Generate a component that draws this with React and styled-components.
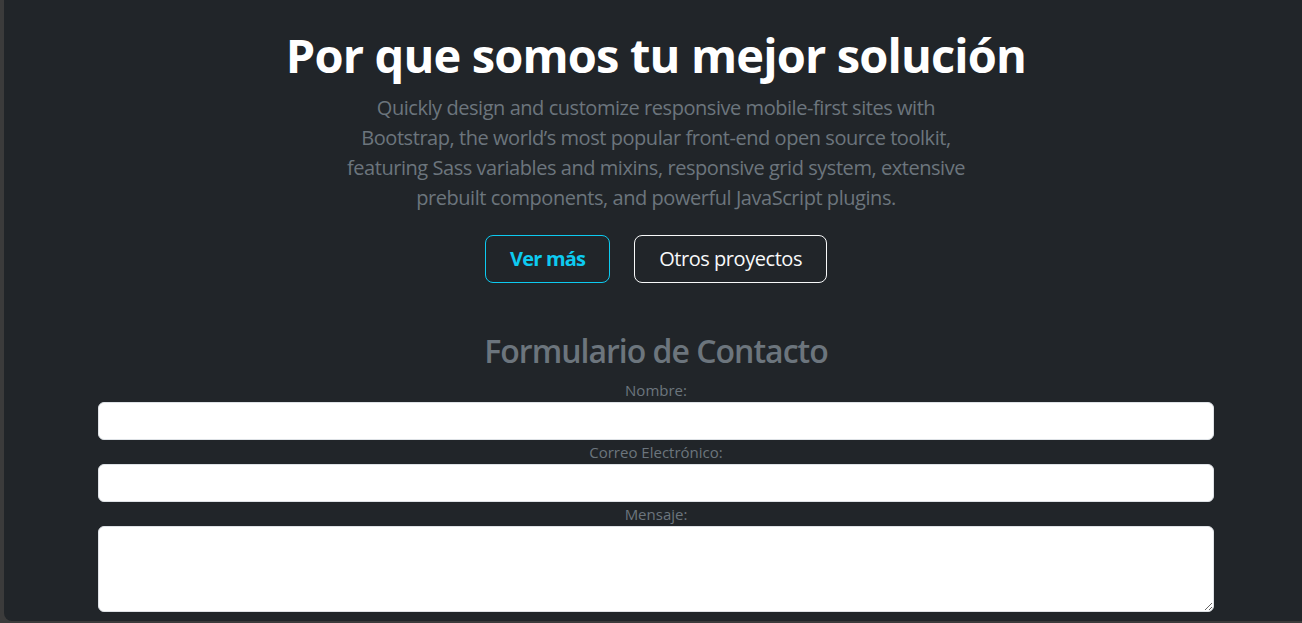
import React from 'react';
import styled, { createGlobalStyle } from 'styled-components';

const GlobalStyle = createGlobalStyle`
  html, body {
    margin: 0;
    padding: 0;
    background: #3b3b3b;
    overflow: hidden;
  }
  body {
    font-family: "Open Sans", "Noto Sans", sans-serif;
  }
`;

const Page = styled.div`
  margin-left: 4px;
  width: calc(100% + 2px);
  height: 621px;
  overflow: hidden;
  background: #212529;
  border-bottom-left-radius: 8px;
`;

const Hero = styled.section`
  text-align: center;
  padding: 27px 24px 49px;
`;

const Title = styled.h1`
  margin: 0 0 8px;
  font-size: 47px;
  font-weight: 700;
  line-height: 57.6px;
  letter-spacing: -0.85px;
  color: #fff;
`;

const Lead = styled.p`
  width: 620px;
  margin: 0 auto 22px;
  font-size: 20px;
  line-height: 1.5;
  letter-spacing: -0.45px;
  color: #6c757d;
`;

const ButtonRow = styled.div`
  display: flex;
  justify-content: center;
  gap: 24px;
`;

const Button = styled.button`
  height: 48px;
  padding: 0 24px;
  background: transparent;
  border-radius: 8px;
  font-family: inherit;
  font-size: 20px;
  line-height: 1.5;
  cursor: pointer;
  border: 1px solid ${p => (p.$variant === 'info' ? '#0dcaf0' : '#f8f9fa')};
  color: ${p => (p.$variant === 'info' ? '#0dcaf0' : '#f8f9fa')};
  font-weight: ${p => (p.$bold ? 700 : 400)};
  letter-spacing: ${p => (p.$bold ? '-0.8px' : '-0.45px')};
`;

const ContactForm = styled.form`
  width: 1116px;
  margin: 0 auto;
  display: flex;
  flex-direction: column;
  text-align: center;
`;

const FormTitle = styled.h2`
  margin: 0 0 8px;
  font-size: 32px;
  font-weight: 600;
  line-height: 1.2;
  letter-spacing: -1px;
  color: #6c757d;
`;

const Label = styled.label`
  display: block;
  font-size: 15px;
  line-height: 24px;
  color: #6c757d;
`;

const Input = styled.input`
  display: block;
  box-sizing: border-box;
  width: 100%;
  height: 38px;
  padding: 6px 12px;
  border: 1px solid #dee2e6;
  border-radius: 6px;
  background: #fff;
  font-family: inherit;
  font-size: 16px;
`;

const TextArea = styled.textarea`
  display: block;
  box-sizing: border-box;
  width: 100%;
  height: 86px;
  padding: 6px 12px;
  border: 1px solid #dee2e6;
  border-radius: 6px;
  background: #fff;
  font-family: inherit;
  font-size: 16px;
`;

export default function App() {
  return (
    <>
      <GlobalStyle />
      <Page>
        <Hero>
          <Title>Por que somos tu mejor solución</Title>
          <Lead>
            Quickly design and customize responsive mobile-first sites with Bootstrap, the world’s most
            popular front-end open source toolkit, featuring Sass variables and mixins, responsive grid
            system, extensive prebuilt components, and powerful JavaScript plugins.
          </Lead>
          <ButtonRow>
            <Button type="button" $variant="info" $bold>Ver más</Button>
            <Button type="button" $variant="light">Otros proyectos</Button>
          </ButtonRow>
        </Hero>
        <ContactForm onSubmit={e => e.preventDefault()}>
          <FormTitle>Formulario de Contacto</FormTitle>
          <Label htmlFor="nombre">Nombre:</Label>
          <Input id="nombre" type="text" />
          <Label htmlFor="correo">Correo Electrónico:</Label>
          <Input id="correo" type="email" />
          <Label htmlFor="mensaje">Mensaje:</Label>
          <TextArea id="mensaje" rows={3} />
        </ContactForm>
      </Page>
    </>
  );
}
